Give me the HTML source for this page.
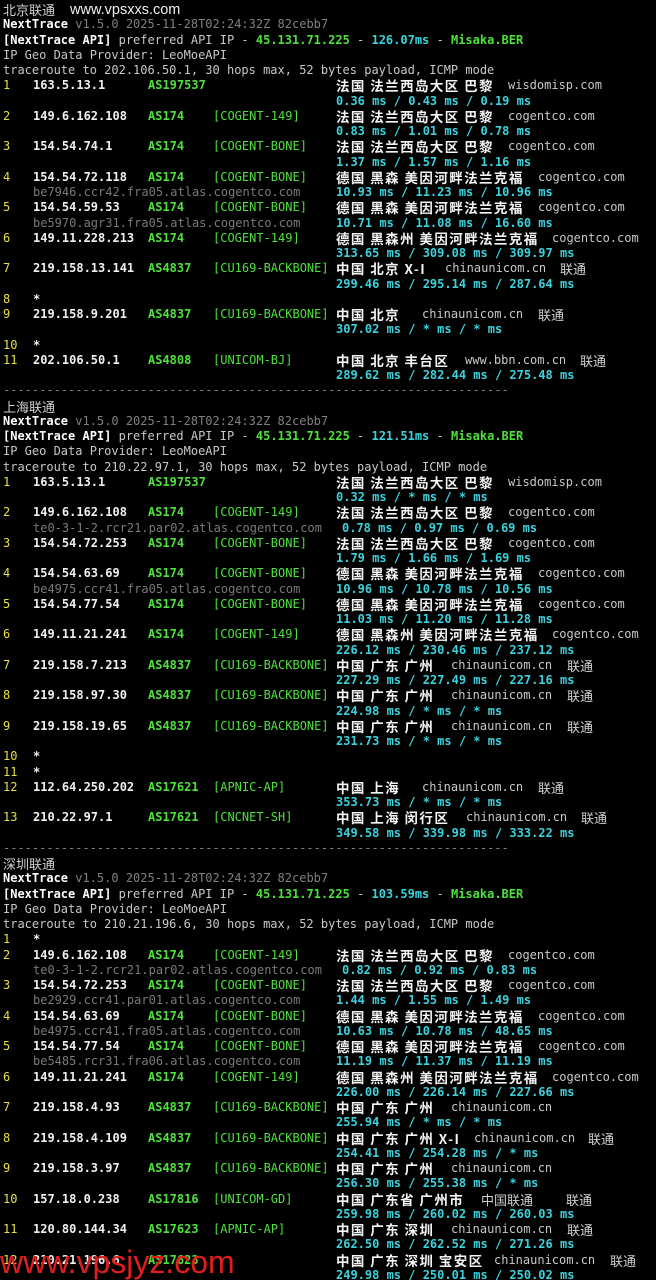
<!DOCTYPE html>
<html><head><meta charset="utf-8"><style>
html,body{margin:0;padding:0;background:#000;width:656px;height:1280px;overflow:hidden}
body{font-family:"DejaVu Sans Mono","Liberation Mono","Noto Sans CJK SC",monospace;font-size:12px;color:#c8c8c8;position:relative}
.r{position:relative;height:15.25px;line-height:15.25px;white-space:pre}
.r span{position:absolute;top:0;white-space:pre}
.t{left:3px}
.d{color:#808080}
.g{color:#4fe03c;font-weight:bold}
.c{color:#3cd2dc;font-weight:bold}
.h{left:3px;color:#e8e040}
.ip{left:33px;font-weight:bold;color:#f0f0f0}
.as{left:148px;color:#4fe03c;font-weight:bold}
.tg{left:213px;color:#4fe03c}
.r span.loc{left:336px;top:0px;font-weight:bold;color:#f4f4f4;font-family:"Noto Sans CJK SC",sans-serif;font-size:13.5px;letter-spacing:1.4px;line-height:15.25px}
.ms{left:336px;color:#3cd2dc;font-weight:bold}
.hn{left:33px;color:#7a7a7a}
.dm{color:#c8c8c8}
.r span.cj{top:0px;font-family:"Noto Sans CJK SC",sans-serif;font-size:13px;color:#d0d0d0;line-height:15.25px}
.wm1{position:absolute;left:70px;top:2px;font-family:"Liberation Sans",sans-serif;font-size:14.5px;color:#f0f0f0}
.wm2{position:absolute;left:0;top:1244px;font-family:"Liberation Sans",sans-serif;font-size:32px;color:#e01e1e}
</style></head><body>
<div style="padding-top:2px">
<div class="r"><span class="t cj">北京联通</span></div>
<div class="r"><span class="t"><b style="color:#fff">NextTrace</b><span class="d" style="position:static"> v1.5.0 2025-11-28T02:24:32Z 82cebb7</span></span></div>
<div class="r"><span class="t"><b style="color:#fff">[NextTrace API]</b> preferred API IP - <b class="g">45.131.71.225</b> - <b class="c">126.07ms</b> - <b class="g">Misaka.BER</b></span></div>
<div class="r"><span class="t">IP Geo Data Provider: LeoMoeAPI</span></div>
<div class="r"><span class="t">traceroute to 202.106.50.1, 30 hops max, 52 bytes payload, ICMP mode</span></div>

<div class="r"><span class="h">1</span><span class="ip">163.5.13.1</span><span class="as">AS197537</span><span class="loc">法国 法兰西岛大区 巴黎</span><span class="dm" style="left:508px">wisdomisp.com</span></div>
<div class="r"><span class="ms">0.36 ms / 0.43 ms / 0.19 ms</span></div>
<div class="r"><span class="h">2</span><span class="ip">149.6.162.108</span><span class="as">AS174</span><span class="tg">[COGENT-149]</span><span class="loc">法国 法兰西岛大区 巴黎</span><span class="dm" style="left:508px">cogentco.com</span></div>
<div class="r"><span class="ms">0.83 ms / 1.01 ms / 0.78 ms</span></div>
<div class="r"><span class="h">3</span><span class="ip">154.54.74.1</span><span class="as">AS174</span><span class="tg">[COGENT-BONE]</span><span class="loc">法国 法兰西岛大区 巴黎</span><span class="dm" style="left:508px">cogentco.com</span></div>
<div class="r"><span class="ms">1.37 ms / 1.57 ms / 1.16 ms</span></div>
<div class="r"><span class="h">4</span><span class="ip">154.54.72.118</span><span class="as">AS174</span><span class="tg">[COGENT-BONE]</span><span class="loc">德国 黑森 美因河畔法兰克福</span><span class="dm" style="left:538px">cogentco.com</span></div>
<div class="r"><span class="hn">be7946.ccr42.fra05.atlas.cogentco.com</span><span class="ms">10.93 ms / 11.23 ms / 10.96 ms</span></div>
<div class="r"><span class="h">5</span><span class="ip">154.54.59.53</span><span class="as">AS174</span><span class="tg">[COGENT-BONE]</span><span class="loc">德国 黑森 美因河畔法兰克福</span><span class="dm" style="left:538px">cogentco.com</span></div>
<div class="r"><span class="hn">be5970.agr31.fra05.atlas.cogentco.com</span><span class="ms">10.71 ms / 11.08 ms / 16.60 ms</span></div>
<div class="r"><span class="h">6</span><span class="ip">149.11.228.213</span><span class="as">AS174</span><span class="tg">[COGENT-149]</span><span class="loc">德国 黑森州 美因河畔法兰克福</span><span class="dm" style="left:552px">cogentco.com</span></div>
<div class="r"><span class="ms">313.65 ms / 309.08 ms / 309.97 ms</span></div>
<div class="r"><span class="h">7</span><span class="ip">219.158.13.141</span><span class="as">AS4837</span><span class="tg">[CU169-BACKBONE]</span><span class="loc">中国 北京 X-I</span><span class="dm" style="left:445px">chinaunicom.cn</span><span class="cj" style="left:560px">联通</span></div>
<div class="r"><span class="ms">299.46 ms / 295.14 ms / 287.64 ms</span></div>
<div class="r"><span class="h">8</span><span class="ip">*</span></div>
<div class="r"><span class="h">9</span><span class="ip">219.158.9.201</span><span class="as">AS4837</span><span class="tg">[CU169-BACKBONE]</span><span class="loc">中国 北京</span><span class="dm" style="left:422px">chinaunicom.cn</span><span class="cj" style="left:538px">联通</span></div>
<div class="r"><span class="ms">307.02 ms / * ms / * ms</span></div>
<div class="r"><span class="h">10</span><span class="ip">*</span></div>
<div class="r"><span class="h">11</span><span class="ip">202.106.50.1</span><span class="as">AS4808</span><span class="tg">[UNICOM-BJ]</span><span class="loc">中国 北京 丰台区</span><span class="dm" style="left:465px">www.bbn.com.cn</span><span class="cj" style="left:580px">联通</span></div>
<div class="r"><span class="ms">289.62 ms / 282.44 ms / 275.48 ms</span></div>
<div class="r"><span class="t d">----------------------------------------------------------------------</span></div>

<div class="r"><span class="t cj">上海联通</span></div>
<div class="r"><span class="t"><b style="color:#fff">NextTrace</b><span class="d" style="position:static"> v1.5.0 2025-11-28T02:24:32Z 82cebb7</span></span></div>
<div class="r"><span class="t"><b style="color:#fff">[NextTrace API]</b> preferred API IP - <b class="g">45.131.71.225</b> - <b class="c">121.51ms</b> - <b class="g">Misaka.BER</b></span></div>
<div class="r"><span class="t">IP Geo Data Provider: LeoMoeAPI</span></div>
<div class="r"><span class="t">traceroute to 210.22.97.1, 30 hops max, 52 bytes payload, ICMP mode</span></div>
<div class="r"><span class="h">1</span><span class="ip">163.5.13.1</span><span class="as">AS197537</span><span class="loc">法国 法兰西岛大区 巴黎</span><span class="dm" style="left:508px">wisdomisp.com</span></div>
<div class="r"><span class="ms">0.32 ms / * ms / * ms</span></div>
<div class="r"><span class="h">2</span><span class="ip">149.6.162.108</span><span class="as">AS174</span><span class="tg">[COGENT-149]</span><span class="loc">法国 法兰西岛大区 巴黎</span><span class="dm" style="left:508px">cogentco.com</span></div>
<div class="r"><span class="hn">te0-3-1-2.rcr21.par02.atlas.cogentco.com</span><span class="ms" style="left:342px">0.78 ms / 0.97 ms / 0.69 ms</span></div>
<div class="r"><span class="h">3</span><span class="ip">154.54.72.253</span><span class="as">AS174</span><span class="tg">[COGENT-BONE]</span><span class="loc">法国 法兰西岛大区 巴黎</span><span class="dm" style="left:508px">cogentco.com</span></div>
<div class="r"><span class="ms">1.79 ms / 1.66 ms / 1.69 ms</span></div>
<div class="r"><span class="h">4</span><span class="ip">154.54.63.69</span><span class="as">AS174</span><span class="tg">[COGENT-BONE]</span><span class="loc">德国 黑森 美因河畔法兰克福</span><span class="dm" style="left:538px">cogentco.com</span></div>
<div class="r"><span class="hn">be4975.ccr41.fra05.atlas.cogentco.com</span><span class="ms">10.96 ms / 10.78 ms / 10.56 ms</span></div>
<div class="r"><span class="h">5</span><span class="ip">154.54.77.54</span><span class="as">AS174</span><span class="tg">[COGENT-BONE]</span><span class="loc">德国 黑森 美因河畔法兰克福</span><span class="dm" style="left:538px">cogentco.com</span></div>
<div class="r"><span class="ms">11.03 ms / 11.20 ms / 11.28 ms</span></div>
<div class="r"><span class="h">6</span><span class="ip">149.11.21.241</span><span class="as">AS174</span><span class="tg">[COGENT-149]</span><span class="loc">德国 黑森州 美因河畔法兰克福</span><span class="dm" style="left:552px">cogentco.com</span></div>
<div class="r"><span class="ms">226.12 ms / 230.46 ms / 237.12 ms</span></div>
<div class="r"><span class="h">7</span><span class="ip">219.158.7.213</span><span class="as">AS4837</span><span class="tg">[CU169-BACKBONE]</span><span class="loc">中国 广东 广州</span><span class="dm" style="left:451px">chinaunicom.cn</span><span class="cj" style="left:567px">联通</span></div>
<div class="r"><span class="ms">227.29 ms / 227.49 ms / 227.16 ms</span></div>
<div class="r"><span class="h">8</span><span class="ip">219.158.97.30</span><span class="as">AS4837</span><span class="tg">[CU169-BACKBONE]</span><span class="loc">中国 广东 广州</span><span class="dm" style="left:451px">chinaunicom.cn</span><span class="cj" style="left:567px">联通</span></div>
<div class="r"><span class="ms">224.98 ms / * ms / * ms</span></div>
<div class="r"><span class="h">9</span><span class="ip">219.158.19.65</span><span class="as">AS4837</span><span class="tg">[CU169-BACKBONE]</span><span class="loc">中国 广东 广州</span><span class="dm" style="left:451px">chinaunicom.cn</span><span class="cj" style="left:567px">联通</span></div>
<div class="r"><span class="ms">231.73 ms / * ms / * ms</span></div>
<div class="r"><span class="h">10</span><span class="ip">*</span></div>
<div class="r"><span class="h">11</span><span class="ip">*</span></div>
<div class="r"><span class="h">12</span><span class="ip">112.64.250.202</span><span class="as">AS17621</span><span class="tg">[APNIC-AP]</span><span class="loc">中国 上海</span><span class="dm" style="left:422px">chinaunicom.cn</span><span class="cj" style="left:538px">联通</span></div>
<div class="r"><span class="ms">353.73 ms / * ms / * ms</span></div>
<div class="r"><span class="h">13</span><span class="ip">210.22.97.1</span><span class="as">AS17621</span><span class="tg">[CNCNET-SH]</span><span class="loc">中国 上海 闵行区</span><span class="dm" style="left:466px">chinaunicom.cn</span><span class="cj" style="left:581px">联通</span></div>
<div class="r"><span class="ms">349.58 ms / 339.98 ms / 333.22 ms</span></div>
<div class="r"><span class="t d">----------------------------------------------------------------------</span></div>

<div class="r"><span class="t cj">深圳联通</span></div>
<div class="r"><span class="t"><b style="color:#fff">NextTrace</b><span class="d" style="position:static"> v1.5.0 2025-11-28T02:24:32Z 82cebb7</span></span></div>
<div class="r"><span class="t"><b style="color:#fff">[NextTrace API]</b> preferred API IP - <b class="g">45.131.71.225</b> - <b class="c">103.59ms</b> - <b class="g">Misaka.BER</b></span></div>
<div class="r"><span class="t">IP Geo Data Provider: LeoMoeAPI</span></div>
<div class="r"><span class="t">traceroute to 210.21.196.6, 30 hops max, 52 bytes payload, ICMP mode</span></div>
<div class="r"><span class="h">1</span><span class="ip">*</span></div>
<div class="r"><span class="h">2</span><span class="ip">149.6.162.108</span><span class="as">AS174</span><span class="tg">[COGENT-149]</span><span class="loc">法国 法兰西岛大区 巴黎</span><span class="dm" style="left:508px">cogentco.com</span></div>
<div class="r"><span class="hn">te0-3-1-2.rcr21.par02.atlas.cogentco.com</span><span class="ms" style="left:342px">0.82 ms / 0.92 ms / 0.83 ms</span></div>
<div class="r"><span class="h">3</span><span class="ip">154.54.72.253</span><span class="as">AS174</span><span class="tg">[COGENT-BONE]</span><span class="loc">法国 法兰西岛大区 巴黎</span><span class="dm" style="left:508px">cogentco.com</span></div>
<div class="r"><span class="hn">be2929.ccr41.par01.atlas.cogentco.com</span><span class="ms">1.44 ms / 1.55 ms / 1.49 ms</span></div>
<div class="r"><span class="h">4</span><span class="ip">154.54.63.69</span><span class="as">AS174</span><span class="tg">[COGENT-BONE]</span><span class="loc">德国 黑森 美因河畔法兰克福</span><span class="dm" style="left:538px">cogentco.com</span></div>
<div class="r"><span class="hn">be4975.ccr41.fra05.atlas.cogentco.com</span><span class="ms">10.63 ms / 10.78 ms / 48.65 ms</span></div>
<div class="r"><span class="h">5</span><span class="ip">154.54.77.54</span><span class="as">AS174</span><span class="tg">[COGENT-BONE]</span><span class="loc">德国 黑森 美因河畔法兰克福</span><span class="dm" style="left:538px">cogentco.com</span></div>
<div class="r"><span class="hn">be5485.rcr31.fra06.atlas.cogentco.com</span><span class="ms">11.19 ms / 11.37 ms / 11.19 ms</span></div>
<div class="r"><span class="h">6</span><span class="ip">149.11.21.241</span><span class="as">AS174</span><span class="tg">[COGENT-149]</span><span class="loc">德国 黑森州 美因河畔法兰克福</span><span class="dm" style="left:552px">cogentco.com</span></div>
<div class="r"><span class="ms">226.00 ms / 226.14 ms / 227.66 ms</span></div>
<div class="r"><span class="h">7</span><span class="ip">219.158.4.93</span><span class="as">AS4837</span><span class="tg">[CU169-BACKBONE]</span><span class="loc">中国 广东 广州</span><span class="dm" style="left:451px">chinaunicom.cn</span></div>
<div class="r"><span class="ms">255.94 ms / * ms / * ms</span></div>
<div class="r"><span class="h">8</span><span class="ip">219.158.4.109</span><span class="as">AS4837</span><span class="tg">[CU169-BACKBONE]</span><span class="loc">中国 广东 广州 X-I</span><span class="dm" style="left:474px">chinaunicom.cn</span><span class="cj" style="left:588px">联通</span></div>
<div class="r"><span class="ms">254.41 ms / 254.28 ms / * ms</span></div>
<div class="r"><span class="h">9</span><span class="ip">219.158.3.97</span><span class="as">AS4837</span><span class="tg">[CU169-BACKBONE]</span><span class="loc">中国 广东 广州</span><span class="dm" style="left:451px">chinaunicom.cn</span></div>
<div class="r"><span class="ms">256.30 ms / 255.38 ms / * ms</span></div>
<div class="r"><span class="h">10</span><span class="ip">157.18.0.238</span><span class="as">AS17816</span><span class="tg">[UNICOM-GD]</span><span class="loc">中国 广东省 广州市</span><span class="cj" style="left:481px">中国联通</span><span class="cj" style="left:566px">联通</span></div>
<div class="r"><span class="ms">259.98 ms / 260.02 ms / 260.03 ms</span></div>
<div class="r"><span class="h">11</span><span class="ip">120.80.144.34</span><span class="as">AS17623</span><span class="tg">[APNIC-AP]</span><span class="loc">中国 广东 深圳</span><span class="dm" style="left:451px">chinaunicom.cn</span><span class="cj" style="left:567px">联通</span></div>
<div class="r"><span class="ms">262.50 ms / 262.52 ms / 271.26 ms</span></div>
<div class="r"><span class="h">12</span><span class="ip">210.21.196.6</span><span class="as">AS17623</span><span class="loc">中国 广东 深圳 宝安区</span><span class="dm" style="left:494px">chinaunicom.cn</span><span class="cj" style="left:610px">联通</span></div>
<div class="r"><span class="ms">249.98 ms / 250.01 ms / 250.02 ms</span></div>
</div>
<div class="wm1">www.vpsxxs.com</div>
<div class="wm2">www.vpsjyz.com</div>
</body></html>
